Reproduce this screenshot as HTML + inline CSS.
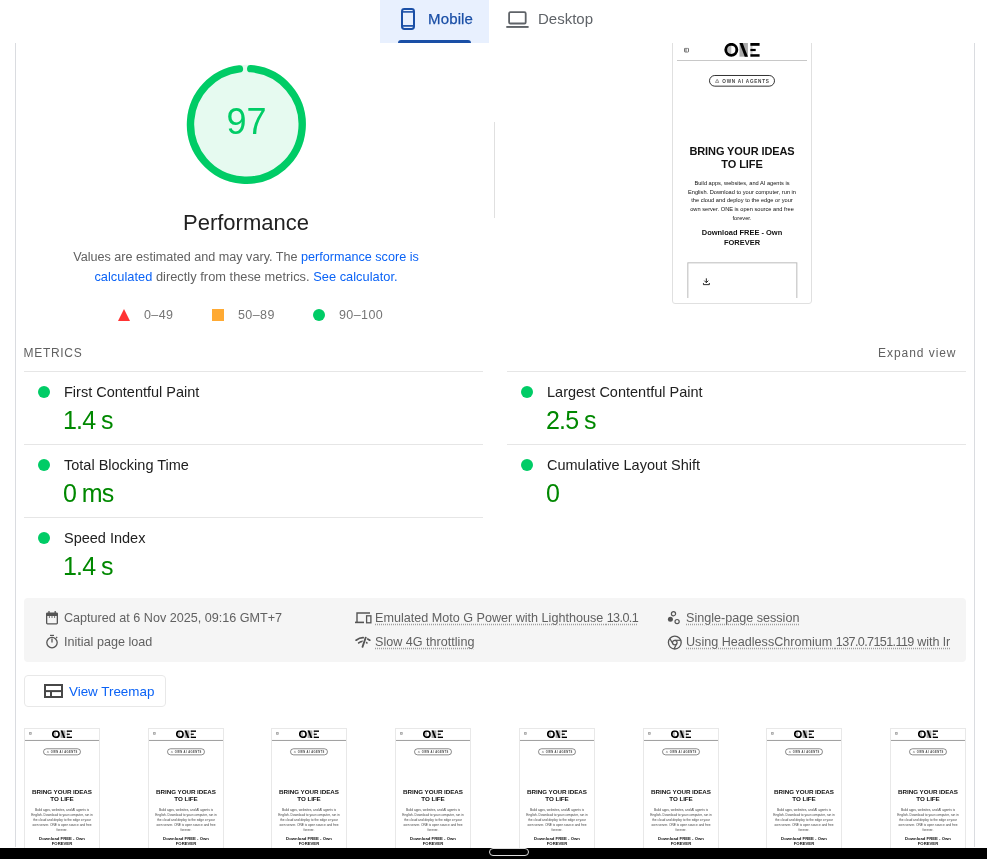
<!DOCTYPE html>
<html><head><meta charset="utf-8">
<style>
*{margin:0;padding:0;box-sizing:border-box}
html,body{width:987px;height:859px;overflow:hidden;background:#fff}
body{position:relative;font-family:"Liberation Sans",sans-serif;color:#212121}
#root{position:absolute;left:0;top:0;width:987px;height:859px;will-change:transform}
.a{position:absolute;white-space:nowrap}
.pg{position:absolute;left:0;top:0;width:390px;height:777px;background:#fff;overflow:hidden;font-family:"Liberation Sans",sans-serif}
.vline{position:absolute;width:1px;background:#dadce0}
.hline{position:absolute;height:1px;background:#e6e6e6}
.dot{position:absolute;width:12px;height:12px;border-radius:50%;background:#00cc66}
.mtitle{font-size:14.5px;line-height:17px;color:#212121}
.mval{font-size:25px;line-height:29px;color:#008800;letter-spacing:-0.8px;word-spacing:-0.5px}
.info{font-size:12.6px;line-height:16px;color:#616161}
.u{text-decoration:underline dotted #9e9e9e;text-underline-offset:1.5px}
.lnk{color:#0b63f6}
</style></head><body><div id="root">

<div class="a" style="left:672px;top:0;width:140px;height:304px;border:1px solid #e0e0e0;border-radius:3px;background:#fff"></div><div class="a" style="left:677px;top:39px;width:130px;height:260px;overflow:hidden"><div style="transform:scale(0.33333);transform-origin:0 0;position:relative;width:390px;height:777px"><div class="pg">
<svg style="position:absolute;left:21px;top:26px" width="15" height="15" viewBox="0 0 15 15"><rect x="1.5" y="1.5" width="12" height="12" rx="2" fill="none" stroke="#555" stroke-width="2.5"/><line x1="6" y1="2" x2="6" y2="13" stroke="#555" stroke-width="2.5"/></svg>
<svg style="position:absolute;left:141px;top:12px" width="108" height="42" viewBox="0 0 108 42">
 <path d="M21.9 8.2 A12.3 12.3 0 0 0 21.9 32.8 Z" fill="#bbb"/>
 <circle cx="21.9" cy="20.5" r="16.6" fill="none" stroke="#000" stroke-width="8.6"/>
 <rect x="46.5" y="0" width="25.2" height="41" fill="#aaa"/>
 <polygon points="46.5,0 56,0 71.7,41 62.2,41" fill="#000"/>
 <rect x="79.2" y="0" width="6.3" height="41" fill="#ccc"/>
 <rect x="79.2" y="0" width="27.6" height="8.4" fill="#000"/>
 <rect x="79.2" y="17.7" width="15.9" height="6.6" fill="#000"/>
 <rect x="79.2" y="33.6" width="27.6" height="7.5" fill="#000"/>
</svg>
<div style="position:absolute;left:0;top:63px;width:390px;height:3px;background:#c8c8c8"></div>
<div style="position:absolute;left:96px;top:108px;width:198px;height:35px;border:3px solid #333;border-radius:18px"></div>
<svg style="position:absolute;left:114px;top:119px" width="13" height="13" viewBox="0 0 13 13"><path d="M6.5 1.5 L12 11.5 H1 Z" fill="none" stroke="#777" stroke-width="2"/><line x1="6.5" y1="5" x2="6.5" y2="8.5" stroke="#777" stroke-width="1.6"/></svg>
<div style="position:absolute;left:136px;top:109.5px;height:35px;font-size:14px;line-height:35px;font-weight:bold;letter-spacing:2.2px;color:#444">OWN AI AGENTS</div>
<div style="position:absolute;left:0;top:318px;width:390px;text-align:center;font-size:33px;line-height:38px;font-weight:bold;letter-spacing:-0.3px;color:#111">BRING YOUR IDEAS<br>TO LIFE</div>
<div style="position:absolute;left:0;top:420px;width:390px;text-align:center;font-size:17px;line-height:26px;color:#111">Build apps, websites, and AI agents is<br>English. Download to your computer, run in<br>the cloud and deploy to the edge or your<br>own server. ONE is open source and free<br>forever.</div>
<div style="position:absolute;left:0;top:566px;width:390px;text-align:center;font-size:22.4px;line-height:29px;font-weight:bold;color:#111">Download FREE - Own<br>FOREVER</div>
<div style="position:absolute;left:31px;top:670px;width:330px;height:200px;border:3px solid #bbb"></div>
<svg style="position:absolute;left:77px;top:716px" width="22" height="24" viewBox="0 0 22 24"><path d="M11 2 V15 M5 9 L11 15 L17 9 M2 16 V21 H20 V16" fill="none" stroke="#222" stroke-width="3"/></svg>
</div></div></div>

<!-- header (covers scrolled content) -->
<div class="a" style="left:0;top:0;width:987px;height:43px;background:#fff"></div>
<div class="a" style="left:380px;top:0;width:109px;height:43px;background:#e8f0fe"></div>
<div class="a" style="left:398px;top:39.5px;width:73px;height:3.5px;background:#1a4fa6;border-radius:3px 3px 0 0"></div>
<svg class="a" style="left:401px;top:8px" width="14" height="22" viewBox="0 0 14 22">
  <rect x="1" y="1" width="12" height="20" rx="2.4" fill="none" stroke="#1a4fa6" stroke-width="2"/>
  <line x1="1.5" y1="3.9" x2="12.5" y2="3.9" stroke="#1a4fa6" stroke-width="1.6"/>
  <line x1="1.5" y1="17.9" x2="12.5" y2="17.9" stroke="#1a4fa6" stroke-width="1.7"/>
</svg>
<div class="a" style="left:428px;top:10px;font-size:15px;line-height:17px;letter-spacing:0.15px;-webkit-text-stroke:0.25px #1a4fa6;color:#1a4fa6">Mobile</div>
<svg class="a" style="left:506px;top:10px" width="24" height="19" viewBox="0 0 24 19">
  <rect x="3.1" y="2.1" width="16.6" height="11.4" rx="1.3" fill="none" stroke="#5f6368" stroke-width="1.8"/>
  <rect x="0.3" y="16" width="22.3" height="1.9" fill="#5f6368"/>
</svg>
<div class="a" style="left:538px;top:10px;font-size:15px;line-height:17px;color:#5f6368">Desktop</div>

<!-- card borders -->
<div class="vline" style="left:15px;top:43px;height:804px"></div>
<div class="vline" style="left:974px;top:43px;height:804px"></div>

<!-- gauge -->
<svg class="a" style="left:186px;top:64px" width="121" height="121" viewBox="0 0 121 121">
  <circle cx="60.35" cy="60.35" r="55.85" fill="#e6faf0" stroke="#e6faf0" stroke-width="7.4"/>
  <circle cx="60.35" cy="60.35" r="55.85" fill="none" stroke="#00cc66" stroke-width="7.4" stroke-linecap="round"
    stroke-dasharray="339 350.9" transform="rotate(-85.5 60.35 60.35)"/>
</svg>
<div class="a" style="left:186.5px;top:102px;width:120px;text-align:center;font-size:36px;line-height:40px;color:#00cc66">97</div>

<div class="a" style="left:146px;top:211px;width:200px;text-align:center;font-size:22px;line-height:24px;color:#212121">Performance</div>
<div class="a" style="left:40px;top:247px;width:412px;text-align:center;font-size:12.62px;line-height:20px;color:#616161">Values are estimated and may vary. The <span class="lnk">performance score is</span><br><span style="font-size:12.8px;letter-spacing:0.03px"><span class="lnk">calculated</span> directly from these metrics. <span class="lnk">See calculator.</span></span></div>

<!-- legend -->
<svg class="a" style="left:118px;top:309px" width="12" height="12" viewBox="0 0 12 12"><polygon points="6,0 12,12 0,12" fill="#ff3333"/></svg>
<div class="a" style="left:144px;top:307px;font-size:12.5px;line-height:16px;letter-spacing:0.4px;color:#757575">0–49</div>
<div class="a" style="left:212px;top:309px;width:12px;height:12px;background:#ffaa33"></div>
<div class="a" style="left:238px;top:307px;font-size:12.5px;line-height:16px;letter-spacing:0.4px;color:#757575">50–89</div>
<div class="a" style="left:313px;top:309px;width:12px;height:12px;border-radius:50%;background:#00cc66"></div>
<div class="a" style="left:339px;top:307px;font-size:12.5px;line-height:16px;letter-spacing:0.4px;color:#757575">90–100</div>

<!-- vertical divider -->
<div class="a" style="left:494px;top:122px;width:1px;height:96px;background:#e0e0e0"></div>

<!-- metrics header -->
<div class="a" style="left:23.5px;top:345px;font-size:12px;line-height:16px;letter-spacing:0.7px;color:#616161">METRICS</div>
<div class="a" style="left:878px;top:345px;font-size:12px;line-height:16px;letter-spacing:0.95px;color:#616161">Expand view</div>

<div class="hline" style="left:24px;top:371px;width:459px"></div>
<div class="hline" style="left:24px;top:444px;width:459px"></div>
<div class="hline" style="left:24px;top:517px;width:459px"></div>
<div class="hline" style="left:507px;top:371px;width:459px"></div>
<div class="hline" style="left:507px;top:444px;width:459px"></div>

<div class="dot" style="left:38px;top:386px"></div>
<div class="a mtitle" style="left:64px;top:384px">First Contentful Paint</div>
<div class="a mval" style="left:63px;top:406px">1.4&nbsp;s</div>
<div class="dot" style="left:38px;top:459px"></div>
<div class="a mtitle" style="left:64px;top:457px">Total Blocking Time</div>
<div class="a mval" style="left:63px;top:479px">0&nbsp;ms</div>
<div class="dot" style="left:38px;top:532px"></div>
<div class="a mtitle" style="left:64px;top:530px">Speed Index</div>
<div class="a mval" style="left:63px;top:552px">1.4&nbsp;s</div>

<div class="dot" style="left:521px;top:386px"></div>
<div class="a mtitle" style="left:547px;top:384px">Largest Contentful Paint</div>
<div class="a mval" style="left:546px;top:406px">2.5&nbsp;s</div>
<div class="dot" style="left:521px;top:459px"></div>
<div class="a mtitle" style="left:547px;top:457px">Cumulative Layout Shift</div>
<div class="a mval" style="left:546px;top:479px">0</div>

<!-- info box -->
<div class="a" style="left:24px;top:598px;width:942px;height:64px;background:#f5f5f5;border-radius:4px;overflow:hidden">
</div>
<svg class="a" style="left:45px;top:610px" width="14" height="16" viewBox="0 0 14 16">
 <rect x="1.65" y="3.15" width="10.7" height="10.7" rx="0.8" fill="none" stroke="#555" stroke-width="1.3"/>
 <rect x="1.5" y="3" width="11" height="3" fill="#555"/>
 <line x1="4" y1="1" x2="4" y2="3.5" stroke="#555" stroke-width="1.3"/>
 <line x1="10.2" y1="1" x2="10.2" y2="3.5" stroke="#555" stroke-width="1.3"/>
 <line x1="4.4" y1="6" x2="4.4" y2="8" stroke="#777" stroke-width="1"/>
 <line x1="7" y1="6" x2="7" y2="8" stroke="#777" stroke-width="1"/>
 <line x1="9.6" y1="6" x2="9.6" y2="8" stroke="#777" stroke-width="1"/>
</svg>
<svg class="a" style="left:45px;top:634px" width="14" height="16" viewBox="0 0 14 16">
 <circle cx="7" cy="8.6" r="5.2" fill="none" stroke="#555" stroke-width="1.3"/>
 <line x1="5" y1="1.4" x2="9" y2="1.4" stroke="#555" stroke-width="1.2"/>
 <line x1="7" y1="4.5" x2="7" y2="8.5" stroke="#555" stroke-width="1.3"/>
 <line x1="11" y1="4.2" x2="12.2" y2="3" stroke="#555" stroke-width="1.1"/>
</svg>
<div class="a info" style="left:64px;top:610px">Captured at 6 Nov 2025, 09:16 GMT+7</div>
<div class="a info" style="left:64px;top:634px">Initial page load</div>

<svg class="a" style="left:354px;top:612px" width="18" height="12" viewBox="0 0 18 12">
 <path d="M3 10.5 V1 H16" fill="none" stroke="#555" stroke-width="1.4"/>
 <rect x="1" y="9.6" width="9" height="1.6" fill="#555"/>
 <rect x="12.6" y="3.8" width="4.3" height="7" fill="none" stroke="#555" stroke-width="1.3"/>
</svg>
<svg class="a" style="left:354px;top:635px" width="18" height="14" viewBox="0 0 18 14">
 <path d="M2.1 5.2 Q9 0 15.8 5.2" fill="none" stroke="#555" stroke-width="1.7" stroke-linecap="round"/>
 <path d="M4.7 7.9 Q8.8 4.9 12.9 7.9" fill="none" stroke="#555" stroke-width="1.7" stroke-linecap="round"/>
 <path d="M11.9 2.2 L8.5 11.9" fill="none" stroke="#f5f5f5" stroke-width="3.4"/>
 <path d="M11.7 2.6 L8.5 11.9" fill="none" stroke="#555" stroke-width="1.8" stroke-linecap="round"/>
</svg>
<div class="a info" style="left:375px;top:610px"><span class="u">Emulated Moto G Power with Lighthouse <span style="letter-spacing:-0.6px">13.0.1</span></span></div>
<div class="a info" style="left:375px;top:634px"><span class="u">Slow 4G throttling</span></div>

<svg class="a" style="left:666px;top:610px" width="14" height="15" viewBox="0 0 14 15">
 <circle cx="7.5" cy="3.7" r="2.1" fill="none" stroke="#555" stroke-width="1.2"/>
 <circle cx="4.4" cy="9.3" r="2.5" fill="#555"/>
 <circle cx="11.1" cy="11.6" r="2.1" fill="none" stroke="#555" stroke-width="1.2"/>
</svg>
<svg class="a" style="left:667px;top:635px" width="16" height="16" viewBox="0 0 16 16">
 <circle cx="7.8" cy="7.6" r="6.4" fill="none" stroke="#555" stroke-width="1.3"/>
 <circle cx="7.8" cy="7.6" r="2.3" fill="none" stroke="#555" stroke-width="1.2"/>
 <line x1="7.8" y1="5.3" x2="13.6" y2="5.3" stroke="#555" stroke-width="1.2"/>
 <line x1="5.8" y1="8.8" x2="2.9" y2="3.6" stroke="#555" stroke-width="1.2"/>
 <line x1="9.8" y1="8.8" x2="6.9" y2="14" stroke="#555" stroke-width="1.2"/>
</svg>
<div class="a info" style="left:686px;top:610px"><span class="u">Single-page session</span></div>
<div class="a info" style="left:686px;top:634px;width:265px;overflow:hidden"><span class="u">Using HeadlessChromium <span style="letter-spacing:-0.62px">137.0.7151.119</span> with lr</span></div>

<!-- treemap button -->
<div class="a" style="left:24px;top:675px;width:142px;height:32px;border:1px solid #e8e8e8;border-radius:4px"></div>
<svg class="a" style="left:44px;top:684px" width="19" height="14" viewBox="0 0 19 14">
  <rect x="1" y="1" width="17" height="12" fill="none" stroke="#474747" stroke-width="2"/>
  <line x1="1" y1="7.1" x2="18" y2="7.1" stroke="#474747" stroke-width="2"/>
  <line x1="7" y1="7.1" x2="7" y2="13" stroke="#474747" stroke-width="2"/>
</svg>
<div class="a lnk" style="left:69px;top:684px;font-size:13.4px;line-height:16px">View Treemap</div>

<!-- filmstrip -->
<div class="a" style="left:24.00px;top:728px;width:76px;height:160px;border:1px solid #e8e8e8;background:#fff;overflow:hidden"><div style="transform:scale(0.18974);transform-origin:0 0;position:relative;top:-1px;width:390px;height:777px"><div class="pg">
<svg style="position:absolute;left:21px;top:21px" width="15" height="15" viewBox="0 0 15 15"><rect x="1.5" y="1.5" width="12" height="12" rx="2" fill="none" stroke="#555" stroke-width="2.5"/><line x1="6" y1="2" x2="6" y2="13" stroke="#555" stroke-width="2.5"/></svg>
<svg style="position:absolute;left:141px;top:12px" width="108" height="42" viewBox="0 0 108 42">
 <path d="M21.9 8.2 A12.3 12.3 0 0 0 21.9 32.8 Z" fill="#bbb"/>
 <circle cx="21.9" cy="20.5" r="16.6" fill="none" stroke="#000" stroke-width="8.6"/>
 <rect x="46.5" y="0" width="25.2" height="41" fill="#aaa"/>
 <polygon points="46.5,0 56,0 71.7,41 62.2,41" fill="#000"/>
 <rect x="79.2" y="0" width="6.3" height="41" fill="#ccc"/>
 <rect x="79.2" y="0" width="27.6" height="8.4" fill="#000"/>
 <rect x="79.2" y="17.7" width="15.9" height="6.6" fill="#000"/>
 <rect x="79.2" y="33.6" width="27.6" height="7.5" fill="#000"/>
</svg>
<div style="position:absolute;left:0;top:63px;width:390px;height:5px;background:#999"></div>
<div style="position:absolute;left:96px;top:108px;width:198px;height:35px;border:3px solid #333;border-radius:18px"></div>
<svg style="position:absolute;left:114px;top:119px" width="13" height="13" viewBox="0 0 13 13"><path d="M6.5 1.5 L12 11.5 H1 Z" fill="none" stroke="#777" stroke-width="2"/><line x1="6.5" y1="5" x2="6.5" y2="8.5" stroke="#777" stroke-width="1.6"/></svg>
<div style="position:absolute;left:136px;top:109.5px;height:35px;font-size:14px;line-height:35px;font-weight:bold;letter-spacing:2.2px;color:#444">OWN AI AGENTS</div>
<div style="position:absolute;left:0;top:318px;width:390px;text-align:center;font-size:33px;line-height:38px;font-weight:bold;letter-spacing:-0.3px;color:#111">BRING YOUR IDEAS<br>TO LIFE</div>
<div style="position:absolute;left:0;top:420px;width:390px;text-align:center;font-size:17px;line-height:26px;color:#444">Build apps, websites, and AI agents is<br>English. Download to your computer, run in<br>the cloud and deploy to the edge or your<br>own server. ONE is open source and free<br>forever.</div>
<div style="position:absolute;left:0;top:566px;width:390px;text-align:center;font-size:22.4px;line-height:29px;font-weight:bold;color:#111">Download FREE - Own<br>FOREVER</div>
<div style="position:absolute;left:31px;top:670px;width:330px;height:200px;border:3px solid #bbb"></div>
<svg style="position:absolute;left:77px;top:716px" width="22" height="24" viewBox="0 0 22 24"><path d="M11 2 V15 M5 9 L11 15 L17 9 M2 16 V21 H20 V16" fill="none" stroke="#222" stroke-width="3"/></svg>
</div></div></div><div class="a" style="left:147.71px;top:728px;width:76px;height:160px;border:1px solid #e8e8e8;background:#fff;overflow:hidden"><div style="transform:scale(0.18974);transform-origin:0 0;position:relative;top:-1px;width:390px;height:777px"><div class="pg">
<svg style="position:absolute;left:21px;top:21px" width="15" height="15" viewBox="0 0 15 15"><rect x="1.5" y="1.5" width="12" height="12" rx="2" fill="none" stroke="#555" stroke-width="2.5"/><line x1="6" y1="2" x2="6" y2="13" stroke="#555" stroke-width="2.5"/></svg>
<svg style="position:absolute;left:141px;top:12px" width="108" height="42" viewBox="0 0 108 42">
 <path d="M21.9 8.2 A12.3 12.3 0 0 0 21.9 32.8 Z" fill="#bbb"/>
 <circle cx="21.9" cy="20.5" r="16.6" fill="none" stroke="#000" stroke-width="8.6"/>
 <rect x="46.5" y="0" width="25.2" height="41" fill="#aaa"/>
 <polygon points="46.5,0 56,0 71.7,41 62.2,41" fill="#000"/>
 <rect x="79.2" y="0" width="6.3" height="41" fill="#ccc"/>
 <rect x="79.2" y="0" width="27.6" height="8.4" fill="#000"/>
 <rect x="79.2" y="17.7" width="15.9" height="6.6" fill="#000"/>
 <rect x="79.2" y="33.6" width="27.6" height="7.5" fill="#000"/>
</svg>
<div style="position:absolute;left:0;top:63px;width:390px;height:5px;background:#999"></div>
<div style="position:absolute;left:96px;top:108px;width:198px;height:35px;border:3px solid #333;border-radius:18px"></div>
<svg style="position:absolute;left:114px;top:119px" width="13" height="13" viewBox="0 0 13 13"><path d="M6.5 1.5 L12 11.5 H1 Z" fill="none" stroke="#777" stroke-width="2"/><line x1="6.5" y1="5" x2="6.5" y2="8.5" stroke="#777" stroke-width="1.6"/></svg>
<div style="position:absolute;left:136px;top:109.5px;height:35px;font-size:14px;line-height:35px;font-weight:bold;letter-spacing:2.2px;color:#444">OWN AI AGENTS</div>
<div style="position:absolute;left:0;top:318px;width:390px;text-align:center;font-size:33px;line-height:38px;font-weight:bold;letter-spacing:-0.3px;color:#111">BRING YOUR IDEAS<br>TO LIFE</div>
<div style="position:absolute;left:0;top:420px;width:390px;text-align:center;font-size:17px;line-height:26px;color:#444">Build apps, websites, and AI agents is<br>English. Download to your computer, run in<br>the cloud and deploy to the edge or your<br>own server. ONE is open source and free<br>forever.</div>
<div style="position:absolute;left:0;top:566px;width:390px;text-align:center;font-size:22.4px;line-height:29px;font-weight:bold;color:#111">Download FREE - Own<br>FOREVER</div>
<div style="position:absolute;left:31px;top:670px;width:330px;height:200px;border:3px solid #bbb"></div>
<svg style="position:absolute;left:77px;top:716px" width="22" height="24" viewBox="0 0 22 24"><path d="M11 2 V15 M5 9 L11 15 L17 9 M2 16 V21 H20 V16" fill="none" stroke="#222" stroke-width="3"/></svg>
</div></div></div><div class="a" style="left:271.42px;top:728px;width:76px;height:160px;border:1px solid #e8e8e8;background:#fff;overflow:hidden"><div style="transform:scale(0.18974);transform-origin:0 0;position:relative;top:-1px;width:390px;height:777px"><div class="pg">
<svg style="position:absolute;left:21px;top:21px" width="15" height="15" viewBox="0 0 15 15"><rect x="1.5" y="1.5" width="12" height="12" rx="2" fill="none" stroke="#555" stroke-width="2.5"/><line x1="6" y1="2" x2="6" y2="13" stroke="#555" stroke-width="2.5"/></svg>
<svg style="position:absolute;left:141px;top:12px" width="108" height="42" viewBox="0 0 108 42">
 <path d="M21.9 8.2 A12.3 12.3 0 0 0 21.9 32.8 Z" fill="#bbb"/>
 <circle cx="21.9" cy="20.5" r="16.6" fill="none" stroke="#000" stroke-width="8.6"/>
 <rect x="46.5" y="0" width="25.2" height="41" fill="#aaa"/>
 <polygon points="46.5,0 56,0 71.7,41 62.2,41" fill="#000"/>
 <rect x="79.2" y="0" width="6.3" height="41" fill="#ccc"/>
 <rect x="79.2" y="0" width="27.6" height="8.4" fill="#000"/>
 <rect x="79.2" y="17.7" width="15.9" height="6.6" fill="#000"/>
 <rect x="79.2" y="33.6" width="27.6" height="7.5" fill="#000"/>
</svg>
<div style="position:absolute;left:0;top:63px;width:390px;height:5px;background:#999"></div>
<div style="position:absolute;left:96px;top:108px;width:198px;height:35px;border:3px solid #333;border-radius:18px"></div>
<svg style="position:absolute;left:114px;top:119px" width="13" height="13" viewBox="0 0 13 13"><path d="M6.5 1.5 L12 11.5 H1 Z" fill="none" stroke="#777" stroke-width="2"/><line x1="6.5" y1="5" x2="6.5" y2="8.5" stroke="#777" stroke-width="1.6"/></svg>
<div style="position:absolute;left:136px;top:109.5px;height:35px;font-size:14px;line-height:35px;font-weight:bold;letter-spacing:2.2px;color:#444">OWN AI AGENTS</div>
<div style="position:absolute;left:0;top:318px;width:390px;text-align:center;font-size:33px;line-height:38px;font-weight:bold;letter-spacing:-0.3px;color:#111">BRING YOUR IDEAS<br>TO LIFE</div>
<div style="position:absolute;left:0;top:420px;width:390px;text-align:center;font-size:17px;line-height:26px;color:#444">Build apps, websites, and AI agents is<br>English. Download to your computer, run in<br>the cloud and deploy to the edge or your<br>own server. ONE is open source and free<br>forever.</div>
<div style="position:absolute;left:0;top:566px;width:390px;text-align:center;font-size:22.4px;line-height:29px;font-weight:bold;color:#111">Download FREE - Own<br>FOREVER</div>
<div style="position:absolute;left:31px;top:670px;width:330px;height:200px;border:3px solid #bbb"></div>
<svg style="position:absolute;left:77px;top:716px" width="22" height="24" viewBox="0 0 22 24"><path d="M11 2 V15 M5 9 L11 15 L17 9 M2 16 V21 H20 V16" fill="none" stroke="#222" stroke-width="3"/></svg>
</div></div></div><div class="a" style="left:395.13px;top:728px;width:76px;height:160px;border:1px solid #e8e8e8;background:#fff;overflow:hidden"><div style="transform:scale(0.18974);transform-origin:0 0;position:relative;top:-1px;width:390px;height:777px"><div class="pg">
<svg style="position:absolute;left:21px;top:21px" width="15" height="15" viewBox="0 0 15 15"><rect x="1.5" y="1.5" width="12" height="12" rx="2" fill="none" stroke="#555" stroke-width="2.5"/><line x1="6" y1="2" x2="6" y2="13" stroke="#555" stroke-width="2.5"/></svg>
<svg style="position:absolute;left:141px;top:12px" width="108" height="42" viewBox="0 0 108 42">
 <path d="M21.9 8.2 A12.3 12.3 0 0 0 21.9 32.8 Z" fill="#bbb"/>
 <circle cx="21.9" cy="20.5" r="16.6" fill="none" stroke="#000" stroke-width="8.6"/>
 <rect x="46.5" y="0" width="25.2" height="41" fill="#aaa"/>
 <polygon points="46.5,0 56,0 71.7,41 62.2,41" fill="#000"/>
 <rect x="79.2" y="0" width="6.3" height="41" fill="#ccc"/>
 <rect x="79.2" y="0" width="27.6" height="8.4" fill="#000"/>
 <rect x="79.2" y="17.7" width="15.9" height="6.6" fill="#000"/>
 <rect x="79.2" y="33.6" width="27.6" height="7.5" fill="#000"/>
</svg>
<div style="position:absolute;left:0;top:63px;width:390px;height:5px;background:#999"></div>
<div style="position:absolute;left:96px;top:108px;width:198px;height:35px;border:3px solid #333;border-radius:18px"></div>
<svg style="position:absolute;left:114px;top:119px" width="13" height="13" viewBox="0 0 13 13"><path d="M6.5 1.5 L12 11.5 H1 Z" fill="none" stroke="#777" stroke-width="2"/><line x1="6.5" y1="5" x2="6.5" y2="8.5" stroke="#777" stroke-width="1.6"/></svg>
<div style="position:absolute;left:136px;top:109.5px;height:35px;font-size:14px;line-height:35px;font-weight:bold;letter-spacing:2.2px;color:#444">OWN AI AGENTS</div>
<div style="position:absolute;left:0;top:318px;width:390px;text-align:center;font-size:33px;line-height:38px;font-weight:bold;letter-spacing:-0.3px;color:#111">BRING YOUR IDEAS<br>TO LIFE</div>
<div style="position:absolute;left:0;top:420px;width:390px;text-align:center;font-size:17px;line-height:26px;color:#444">Build apps, websites, and AI agents is<br>English. Download to your computer, run in<br>the cloud and deploy to the edge or your<br>own server. ONE is open source and free<br>forever.</div>
<div style="position:absolute;left:0;top:566px;width:390px;text-align:center;font-size:22.4px;line-height:29px;font-weight:bold;color:#111">Download FREE - Own<br>FOREVER</div>
<div style="position:absolute;left:31px;top:670px;width:330px;height:200px;border:3px solid #bbb"></div>
<svg style="position:absolute;left:77px;top:716px" width="22" height="24" viewBox="0 0 22 24"><path d="M11 2 V15 M5 9 L11 15 L17 9 M2 16 V21 H20 V16" fill="none" stroke="#222" stroke-width="3"/></svg>
</div></div></div><div class="a" style="left:518.84px;top:728px;width:76px;height:160px;border:1px solid #e8e8e8;background:#fff;overflow:hidden"><div style="transform:scale(0.18974);transform-origin:0 0;position:relative;top:-1px;width:390px;height:777px"><div class="pg">
<svg style="position:absolute;left:21px;top:21px" width="15" height="15" viewBox="0 0 15 15"><rect x="1.5" y="1.5" width="12" height="12" rx="2" fill="none" stroke="#555" stroke-width="2.5"/><line x1="6" y1="2" x2="6" y2="13" stroke="#555" stroke-width="2.5"/></svg>
<svg style="position:absolute;left:141px;top:12px" width="108" height="42" viewBox="0 0 108 42">
 <path d="M21.9 8.2 A12.3 12.3 0 0 0 21.9 32.8 Z" fill="#bbb"/>
 <circle cx="21.9" cy="20.5" r="16.6" fill="none" stroke="#000" stroke-width="8.6"/>
 <rect x="46.5" y="0" width="25.2" height="41" fill="#aaa"/>
 <polygon points="46.5,0 56,0 71.7,41 62.2,41" fill="#000"/>
 <rect x="79.2" y="0" width="6.3" height="41" fill="#ccc"/>
 <rect x="79.2" y="0" width="27.6" height="8.4" fill="#000"/>
 <rect x="79.2" y="17.7" width="15.9" height="6.6" fill="#000"/>
 <rect x="79.2" y="33.6" width="27.6" height="7.5" fill="#000"/>
</svg>
<div style="position:absolute;left:0;top:63px;width:390px;height:5px;background:#999"></div>
<div style="position:absolute;left:96px;top:108px;width:198px;height:35px;border:3px solid #333;border-radius:18px"></div>
<svg style="position:absolute;left:114px;top:119px" width="13" height="13" viewBox="0 0 13 13"><path d="M6.5 1.5 L12 11.5 H1 Z" fill="none" stroke="#777" stroke-width="2"/><line x1="6.5" y1="5" x2="6.5" y2="8.5" stroke="#777" stroke-width="1.6"/></svg>
<div style="position:absolute;left:136px;top:109.5px;height:35px;font-size:14px;line-height:35px;font-weight:bold;letter-spacing:2.2px;color:#444">OWN AI AGENTS</div>
<div style="position:absolute;left:0;top:318px;width:390px;text-align:center;font-size:33px;line-height:38px;font-weight:bold;letter-spacing:-0.3px;color:#111">BRING YOUR IDEAS<br>TO LIFE</div>
<div style="position:absolute;left:0;top:420px;width:390px;text-align:center;font-size:17px;line-height:26px;color:#444">Build apps, websites, and AI agents is<br>English. Download to your computer, run in<br>the cloud and deploy to the edge or your<br>own server. ONE is open source and free<br>forever.</div>
<div style="position:absolute;left:0;top:566px;width:390px;text-align:center;font-size:22.4px;line-height:29px;font-weight:bold;color:#111">Download FREE - Own<br>FOREVER</div>
<div style="position:absolute;left:31px;top:670px;width:330px;height:200px;border:3px solid #bbb"></div>
<svg style="position:absolute;left:77px;top:716px" width="22" height="24" viewBox="0 0 22 24"><path d="M11 2 V15 M5 9 L11 15 L17 9 M2 16 V21 H20 V16" fill="none" stroke="#222" stroke-width="3"/></svg>
</div></div></div><div class="a" style="left:642.55px;top:728px;width:76px;height:160px;border:1px solid #e8e8e8;background:#fff;overflow:hidden"><div style="transform:scale(0.18974);transform-origin:0 0;position:relative;top:-1px;width:390px;height:777px"><div class="pg">
<svg style="position:absolute;left:21px;top:21px" width="15" height="15" viewBox="0 0 15 15"><rect x="1.5" y="1.5" width="12" height="12" rx="2" fill="none" stroke="#555" stroke-width="2.5"/><line x1="6" y1="2" x2="6" y2="13" stroke="#555" stroke-width="2.5"/></svg>
<svg style="position:absolute;left:141px;top:12px" width="108" height="42" viewBox="0 0 108 42">
 <path d="M21.9 8.2 A12.3 12.3 0 0 0 21.9 32.8 Z" fill="#bbb"/>
 <circle cx="21.9" cy="20.5" r="16.6" fill="none" stroke="#000" stroke-width="8.6"/>
 <rect x="46.5" y="0" width="25.2" height="41" fill="#aaa"/>
 <polygon points="46.5,0 56,0 71.7,41 62.2,41" fill="#000"/>
 <rect x="79.2" y="0" width="6.3" height="41" fill="#ccc"/>
 <rect x="79.2" y="0" width="27.6" height="8.4" fill="#000"/>
 <rect x="79.2" y="17.7" width="15.9" height="6.6" fill="#000"/>
 <rect x="79.2" y="33.6" width="27.6" height="7.5" fill="#000"/>
</svg>
<div style="position:absolute;left:0;top:63px;width:390px;height:5px;background:#999"></div>
<div style="position:absolute;left:96px;top:108px;width:198px;height:35px;border:3px solid #333;border-radius:18px"></div>
<svg style="position:absolute;left:114px;top:119px" width="13" height="13" viewBox="0 0 13 13"><path d="M6.5 1.5 L12 11.5 H1 Z" fill="none" stroke="#777" stroke-width="2"/><line x1="6.5" y1="5" x2="6.5" y2="8.5" stroke="#777" stroke-width="1.6"/></svg>
<div style="position:absolute;left:136px;top:109.5px;height:35px;font-size:14px;line-height:35px;font-weight:bold;letter-spacing:2.2px;color:#444">OWN AI AGENTS</div>
<div style="position:absolute;left:0;top:318px;width:390px;text-align:center;font-size:33px;line-height:38px;font-weight:bold;letter-spacing:-0.3px;color:#111">BRING YOUR IDEAS<br>TO LIFE</div>
<div style="position:absolute;left:0;top:420px;width:390px;text-align:center;font-size:17px;line-height:26px;color:#444">Build apps, websites, and AI agents is<br>English. Download to your computer, run in<br>the cloud and deploy to the edge or your<br>own server. ONE is open source and free<br>forever.</div>
<div style="position:absolute;left:0;top:566px;width:390px;text-align:center;font-size:22.4px;line-height:29px;font-weight:bold;color:#111">Download FREE - Own<br>FOREVER</div>
<div style="position:absolute;left:31px;top:670px;width:330px;height:200px;border:3px solid #bbb"></div>
<svg style="position:absolute;left:77px;top:716px" width="22" height="24" viewBox="0 0 22 24"><path d="M11 2 V15 M5 9 L11 15 L17 9 M2 16 V21 H20 V16" fill="none" stroke="#222" stroke-width="3"/></svg>
</div></div></div><div class="a" style="left:766.26px;top:728px;width:76px;height:160px;border:1px solid #e8e8e8;background:#fff;overflow:hidden"><div style="transform:scale(0.18974);transform-origin:0 0;position:relative;top:-1px;width:390px;height:777px"><div class="pg">
<svg style="position:absolute;left:21px;top:21px" width="15" height="15" viewBox="0 0 15 15"><rect x="1.5" y="1.5" width="12" height="12" rx="2" fill="none" stroke="#555" stroke-width="2.5"/><line x1="6" y1="2" x2="6" y2="13" stroke="#555" stroke-width="2.5"/></svg>
<svg style="position:absolute;left:141px;top:12px" width="108" height="42" viewBox="0 0 108 42">
 <path d="M21.9 8.2 A12.3 12.3 0 0 0 21.9 32.8 Z" fill="#bbb"/>
 <circle cx="21.9" cy="20.5" r="16.6" fill="none" stroke="#000" stroke-width="8.6"/>
 <rect x="46.5" y="0" width="25.2" height="41" fill="#aaa"/>
 <polygon points="46.5,0 56,0 71.7,41 62.2,41" fill="#000"/>
 <rect x="79.2" y="0" width="6.3" height="41" fill="#ccc"/>
 <rect x="79.2" y="0" width="27.6" height="8.4" fill="#000"/>
 <rect x="79.2" y="17.7" width="15.9" height="6.6" fill="#000"/>
 <rect x="79.2" y="33.6" width="27.6" height="7.5" fill="#000"/>
</svg>
<div style="position:absolute;left:0;top:63px;width:390px;height:5px;background:#999"></div>
<div style="position:absolute;left:96px;top:108px;width:198px;height:35px;border:3px solid #333;border-radius:18px"></div>
<svg style="position:absolute;left:114px;top:119px" width="13" height="13" viewBox="0 0 13 13"><path d="M6.5 1.5 L12 11.5 H1 Z" fill="none" stroke="#777" stroke-width="2"/><line x1="6.5" y1="5" x2="6.5" y2="8.5" stroke="#777" stroke-width="1.6"/></svg>
<div style="position:absolute;left:136px;top:109.5px;height:35px;font-size:14px;line-height:35px;font-weight:bold;letter-spacing:2.2px;color:#444">OWN AI AGENTS</div>
<div style="position:absolute;left:0;top:318px;width:390px;text-align:center;font-size:33px;line-height:38px;font-weight:bold;letter-spacing:-0.3px;color:#111">BRING YOUR IDEAS<br>TO LIFE</div>
<div style="position:absolute;left:0;top:420px;width:390px;text-align:center;font-size:17px;line-height:26px;color:#444">Build apps, websites, and AI agents is<br>English. Download to your computer, run in<br>the cloud and deploy to the edge or your<br>own server. ONE is open source and free<br>forever.</div>
<div style="position:absolute;left:0;top:566px;width:390px;text-align:center;font-size:22.4px;line-height:29px;font-weight:bold;color:#111">Download FREE - Own<br>FOREVER</div>
<div style="position:absolute;left:31px;top:670px;width:330px;height:200px;border:3px solid #bbb"></div>
<svg style="position:absolute;left:77px;top:716px" width="22" height="24" viewBox="0 0 22 24"><path d="M11 2 V15 M5 9 L11 15 L17 9 M2 16 V21 H20 V16" fill="none" stroke="#222" stroke-width="3"/></svg>
</div></div></div><div class="a" style="left:889.97px;top:728px;width:76px;height:160px;border:1px solid #e8e8e8;background:#fff;overflow:hidden"><div style="transform:scale(0.18974);transform-origin:0 0;position:relative;top:-1px;width:390px;height:777px"><div class="pg">
<svg style="position:absolute;left:21px;top:21px" width="15" height="15" viewBox="0 0 15 15"><rect x="1.5" y="1.5" width="12" height="12" rx="2" fill="none" stroke="#555" stroke-width="2.5"/><line x1="6" y1="2" x2="6" y2="13" stroke="#555" stroke-width="2.5"/></svg>
<svg style="position:absolute;left:141px;top:12px" width="108" height="42" viewBox="0 0 108 42">
 <path d="M21.9 8.2 A12.3 12.3 0 0 0 21.9 32.8 Z" fill="#bbb"/>
 <circle cx="21.9" cy="20.5" r="16.6" fill="none" stroke="#000" stroke-width="8.6"/>
 <rect x="46.5" y="0" width="25.2" height="41" fill="#aaa"/>
 <polygon points="46.5,0 56,0 71.7,41 62.2,41" fill="#000"/>
 <rect x="79.2" y="0" width="6.3" height="41" fill="#ccc"/>
 <rect x="79.2" y="0" width="27.6" height="8.4" fill="#000"/>
 <rect x="79.2" y="17.7" width="15.9" height="6.6" fill="#000"/>
 <rect x="79.2" y="33.6" width="27.6" height="7.5" fill="#000"/>
</svg>
<div style="position:absolute;left:0;top:63px;width:390px;height:5px;background:#999"></div>
<div style="position:absolute;left:96px;top:108px;width:198px;height:35px;border:3px solid #333;border-radius:18px"></div>
<svg style="position:absolute;left:114px;top:119px" width="13" height="13" viewBox="0 0 13 13"><path d="M6.5 1.5 L12 11.5 H1 Z" fill="none" stroke="#777" stroke-width="2"/><line x1="6.5" y1="5" x2="6.5" y2="8.5" stroke="#777" stroke-width="1.6"/></svg>
<div style="position:absolute;left:136px;top:109.5px;height:35px;font-size:14px;line-height:35px;font-weight:bold;letter-spacing:2.2px;color:#444">OWN AI AGENTS</div>
<div style="position:absolute;left:0;top:318px;width:390px;text-align:center;font-size:33px;line-height:38px;font-weight:bold;letter-spacing:-0.3px;color:#111">BRING YOUR IDEAS<br>TO LIFE</div>
<div style="position:absolute;left:0;top:420px;width:390px;text-align:center;font-size:17px;line-height:26px;color:#444">Build apps, websites, and AI agents is<br>English. Download to your computer, run in<br>the cloud and deploy to the edge or your<br>own server. ONE is open source and free<br>forever.</div>
<div style="position:absolute;left:0;top:566px;width:390px;text-align:center;font-size:22.4px;line-height:29px;font-weight:bold;color:#111">Download FREE - Own<br>FOREVER</div>
<div style="position:absolute;left:31px;top:670px;width:330px;height:200px;border:3px solid #bbb"></div>
<svg style="position:absolute;left:77px;top:716px" width="22" height="24" viewBox="0 0 22 24"><path d="M11 2 V15 M5 9 L11 15 L17 9 M2 16 V21 H20 V16" fill="none" stroke="#222" stroke-width="3"/></svg>
</div></div></div>

<!-- bottom bar -->
<div class="a" style="left:0;top:848px;width:987px;height:11px;background:#000"></div>
<div class="a" style="left:489px;top:848px;width:40px;height:8px;border:1px solid #ddd;border-radius:5px"></div>
</div></body></html>
